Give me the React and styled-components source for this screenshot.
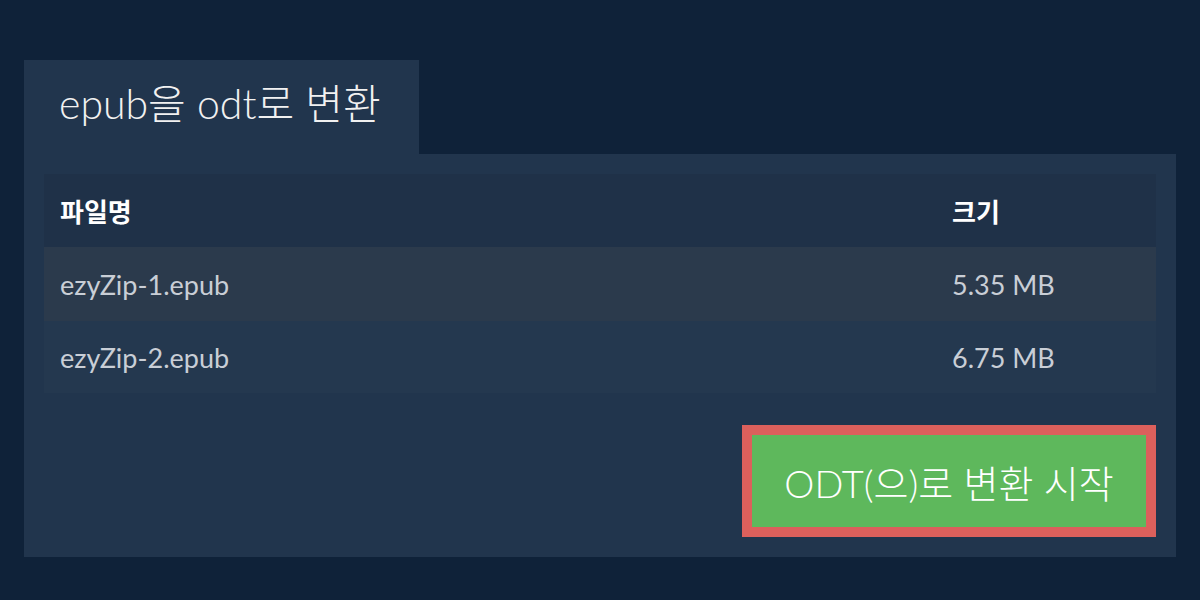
import React from 'react';
import styled, { createGlobalStyle } from 'styled-components';

const GlobalStyle = createGlobalStyle`
  html, body {
    margin: 0;
    padding: 0;
    background: #0f2239;
    font-family: Lato, "Noto Sans CJK KR", sans-serif;
  }
`;

const Page = styled.div`
  width: 1200px;
  height: 600px;
  box-sizing: border-box;
  padding: 60px 24px 0;
`;

const Tab = styled.div`
  display: inline-block;
  background: #21354d;
  color: #f1f1f1;
  font-size: 41px;
  font-weight: 300;
  line-height: 88px;
  height: 94px;
  padding: 0 38px 6px 35px;
  box-sizing: border-box;
  vertical-align: top;
`;

const Panel = styled.div`
  background: #21354d;
  padding: 20px;
  display: flex;
  flex-direction: column;
  gap: 32px;
`;

const Table = styled.div`
  display: flex;
  flex-direction: column;
`;

const Row = styled.div`
  display: grid;
  grid-template-columns: 1fr 188px;
  height: ${(p) => p.$h}px;
  align-items: center;
  padding: 0 16px;
  background: ${(p) => p.$bg};
  color: ${(p) => (p.$head ? '#ffffff' : '#c9ced6')};
  font-size: ${(p) => (p.$head ? 26 : 27)}px;
  font-weight: ${(p) => (p.$head ? 700 : 400)};
`;

const Actions = styled.div`
  display: flex;
  justify-content: flex-end;
`;

const StartButton = styled.button`
  box-sizing: border-box;
  width: 414px;
  height: 112px;
  border: 10px solid #dc605c;
  background: #5eb85c;
  color: #ffffff;
  font-family: Lato, "Noto Sans CJK KR", sans-serif;
  font-size: 38px;
  font-weight: 300;
  padding: 0;
  cursor: pointer;
`;

const files = [
  { name: 'ezyZip-1.epub', size: '5.35 MB', bg: '#2b3a4c', h: 74 },
  { name: 'ezyZip-2.epub', size: '6.75 MB', bg: '#24384f', h: 72 },
];

export default function App() {
  return (
    <>
      <GlobalStyle />
      <Page>
        <Tab>epub을 odt로 변환</Tab>
        <Panel>
          <Table>
            <Row $head $h={73} $bg="#1f3148">
              <span>파일명</span>
              <span>크기</span>
            </Row>
            {files.map((f) => (
              <Row key={f.name} $h={f.h} $bg={f.bg}>
                <span>{f.name}</span>
                <span>{f.size}</span>
              </Row>
            ))}
          </Table>
          <Actions>
            <StartButton>ODT(으)로 변환 시작</StartButton>
          </Actions>
        </Panel>
      </Page>
    </>
  );
}
